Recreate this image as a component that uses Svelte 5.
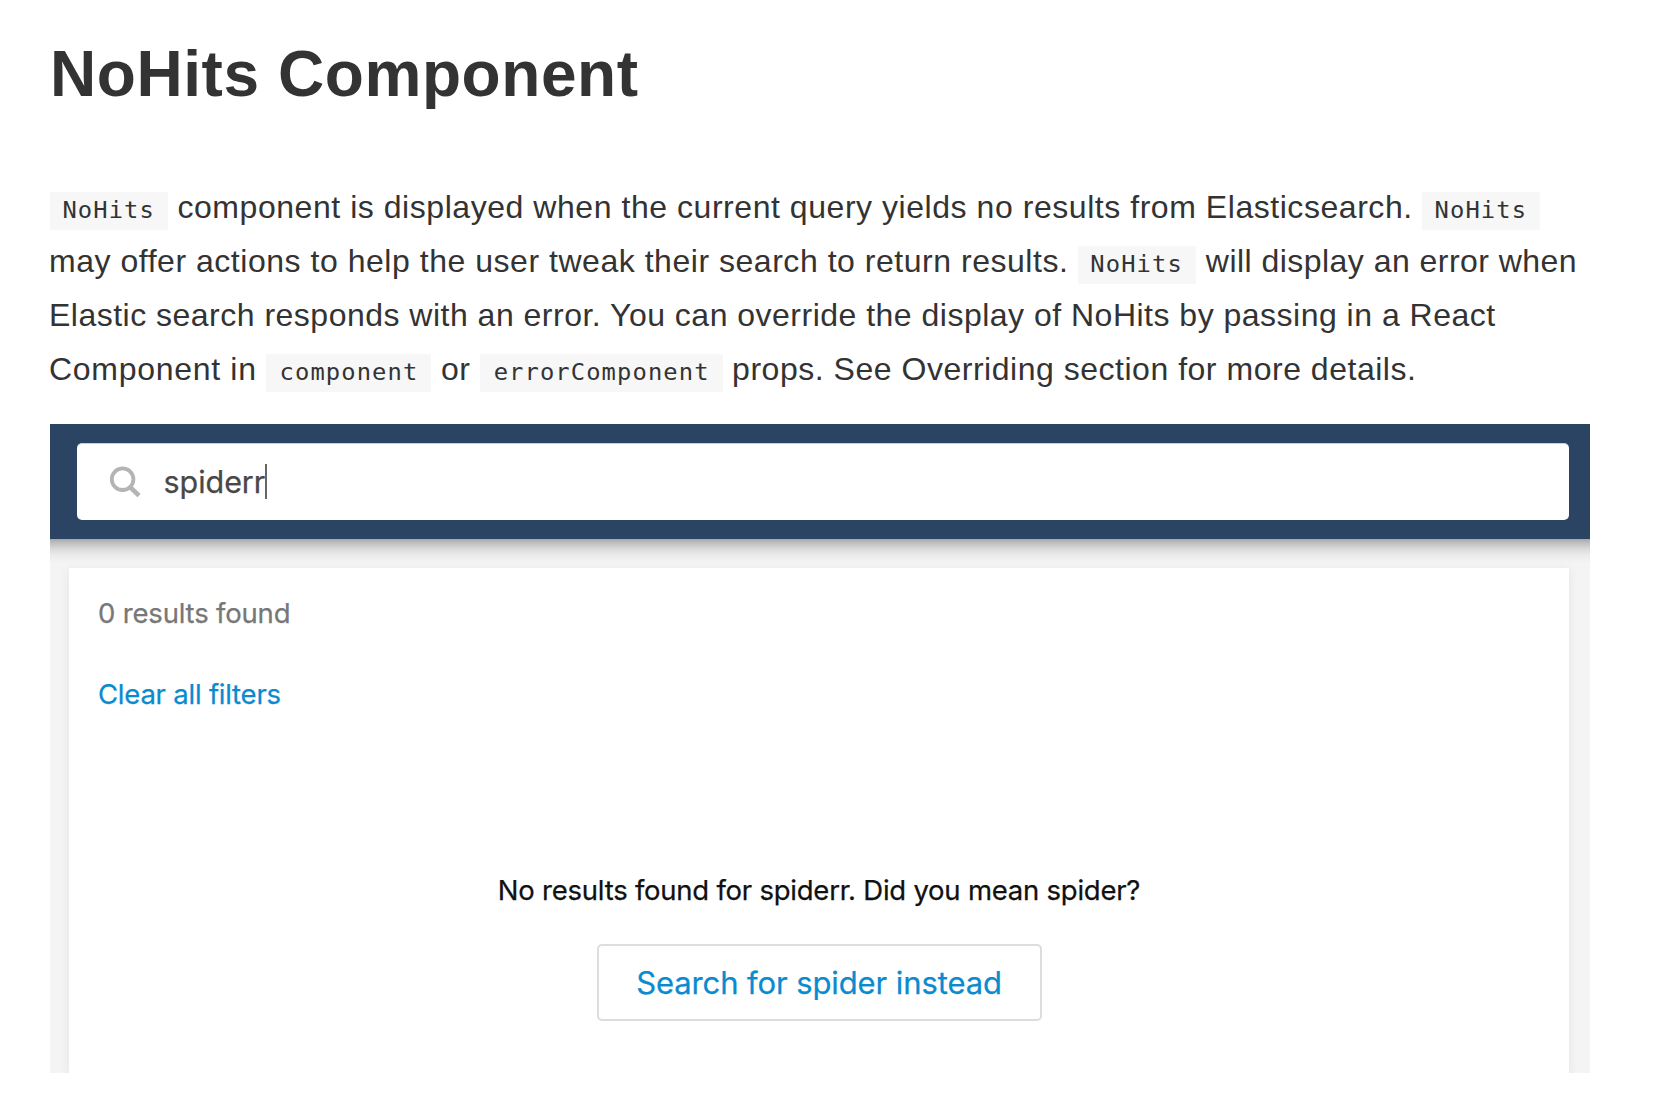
<script>
  const query = 'spiderr';
  const suggestion = 'spider';
</script>

<article>
  <h1>NoHits Component</h1>

  <div class="intro">
    <div class="line l1">
      <code>NoHits</code>
      <span>component is displayed when the current query yields no results from Elasticsearch.</span>
      <code>NoHits</code>
    </div>
    <div class="line l2">
      <span>may offer actions to help the user tweak their search to return results.</span>
      <code>NoHits</code>
      <span class="tail">will display an error when</span>
    </div>
    <div class="line l3">
      <span>Elastic search responds with an error. You can override the display of NoHits by passing in a React</span>
    </div>
    <div class="line l4">
      <span class="lead">Component in</span>
      <code>component</code>
      <span>or</span>
      <code>errorComponent</code>
      <span class="tail">props. See Overriding section for more details.</span>
    </div>
  </div>

  <section class="demo">
    <header>
      <div class="search">
        <svg class="glass" viewBox="0 0 32 32" width="32" height="32" aria-hidden="true">
          <path class="handle" d="M21 21 L30 29.6" />
          <circle cx="13.6" cy="13.2" r="10.8" />
        </svg>
        <span class="query">{query}</span><span class="caret"></span>
      </div>
    </header>
    <div class="body">
      <div class="panel">
        <p class="count">0 results found</p>
        <p class="clear">Clear all filters</p>
        <div class="empty">
          <p>No results found for {query}. Did you mean {suggestion}?</p>
          <button>Search for {suggestion} instead</button>
        </div>
      </div>
    </div>
  </section>
</article>

<style>
  :global(body) {
    background: #fff;
  }
  article {
    box-sizing: border-box;
    height: 1120px;
    padding: 38px 0 0 50px;
    overflow: hidden;
    font-family: 'Liberation Sans', Arial, sans-serif;
    color: #333;
  }
  p,
  h1 {
    margin: 0;
  }
  h1 {
    font-size: 64px;
    line-height: 72px;
    letter-spacing: 0.57px;
    margin-bottom: 70px;
  }
  .intro {
    font-size: 32px;
    line-height: 54px;
    white-space: nowrap;
  }
  .line {
    display: flex;
    align-items: baseline;
    gap: 9.5px;
    height: 54px;
  }
  .l1 {
    letter-spacing: 0.546px;
  }
  .l2 {
    letter-spacing: 0.53px;
    margin-left: -1px;
  }
  .l2 .tail {
    letter-spacing: 0.46px;
    margin-left: 0.5px;
  }
  .l3 {
    letter-spacing: 0.49px;
    margin-left: -1px;
  }
  .l4 {
    letter-spacing: 0.7px;
    margin-left: -1px;
  }
  .l4 .tail {
    letter-spacing: 0.52px;
  }
  code {
    padding: 0 13px 2px 12.4px;
    background: #f7f7f7;
    font-family: 'DejaVu Sans Mono', monospace;
    font-size: 23.8px;
    line-height: 36px;
    letter-spacing: 1.1px;
  }
  .l4 code {
    padding: 0 13px 2px 13.4px;
  }
  .demo {
    display: flex;
    flex-direction: column;
    width: 1540px;
    height: 649px;
    margin-top: 28px;
    overflow: hidden;
    background: #f4f4f4;
    font-family: Inter, sans-serif;
    -webkit-text-stroke: 0.25px currentColor;
  }
  header {
    flex: none;
    box-sizing: border-box;
    height: 115px;
    padding: 19px 21px 19px 27px;
    background: #2b4464;
  }
  .search {
    display: flex;
    align-items: center;
    box-sizing: border-box;
    height: 77px;
    padding-left: 32px;
    border-top: 1px solid #c9cddd;
    border-radius: 5px;
    background: #fff;
  }
  .glass {
    margin-right: 22.5px;
    margin-bottom: 1px;
    fill: none;
    stroke: #b4b4b4;
    stroke-width: 3.8;
  }
  .handle {
    stroke-width: 4.6;
  }
  .query {
    font-size: 30.5px;
    line-height: 40px;
    padding-bottom: 1px;
    letter-spacing: -0.05px;
    color: #484848;
  }
  .caret {
    width: 2px;
    height: 35px;
    margin-bottom: 1px;
    background: #666;
  }
  .body {
    flex: 1;
    display: flex;
    padding: 29px 21px 0 19px;
    background: linear-gradient(#9fa3a8 0, #b0b0b0 1px, #c4c4c4 5px, #dadada 10px, #ebebeb 16px, #f4f4f4 24px);
  }
  .panel {
    flex: 1;
    padding: 27px 29px 0;
    background: #fff;
    box-shadow: 0 2px 10px rgba(0, 0, 0, 0.07);
  }
  .count,
  .clear,
  .empty p {
    font-size: 27.5px;
    line-height: 36px;
  }
  .count {
    letter-spacing: -0.18px;
    color: #777;
  }
  .clear {
    margin-top: 45px;
    letter-spacing: -0.22px;
    color: #0a8bcf;
  }
  .empty {
    display: flex;
    flex-direction: column;
    align-items: center;
    margin-top: 160px;
  }
  .empty p {
    letter-spacing: -0.236px;
    color: #111;
  }
  button {
    box-sizing: border-box;
    width: 445px;
    height: 77px;
    margin-top: 36px;
    padding: 0;
    border: 2px solid #ddd;
    border-radius: 5px;
    background: #fff;
    font-family: Inter, sans-serif;
    font-size: 31px;
    letter-spacing: -0.1px;
    color: #0a8bcf;
    -webkit-text-stroke: 0.25px currentColor;
  }
</style>
